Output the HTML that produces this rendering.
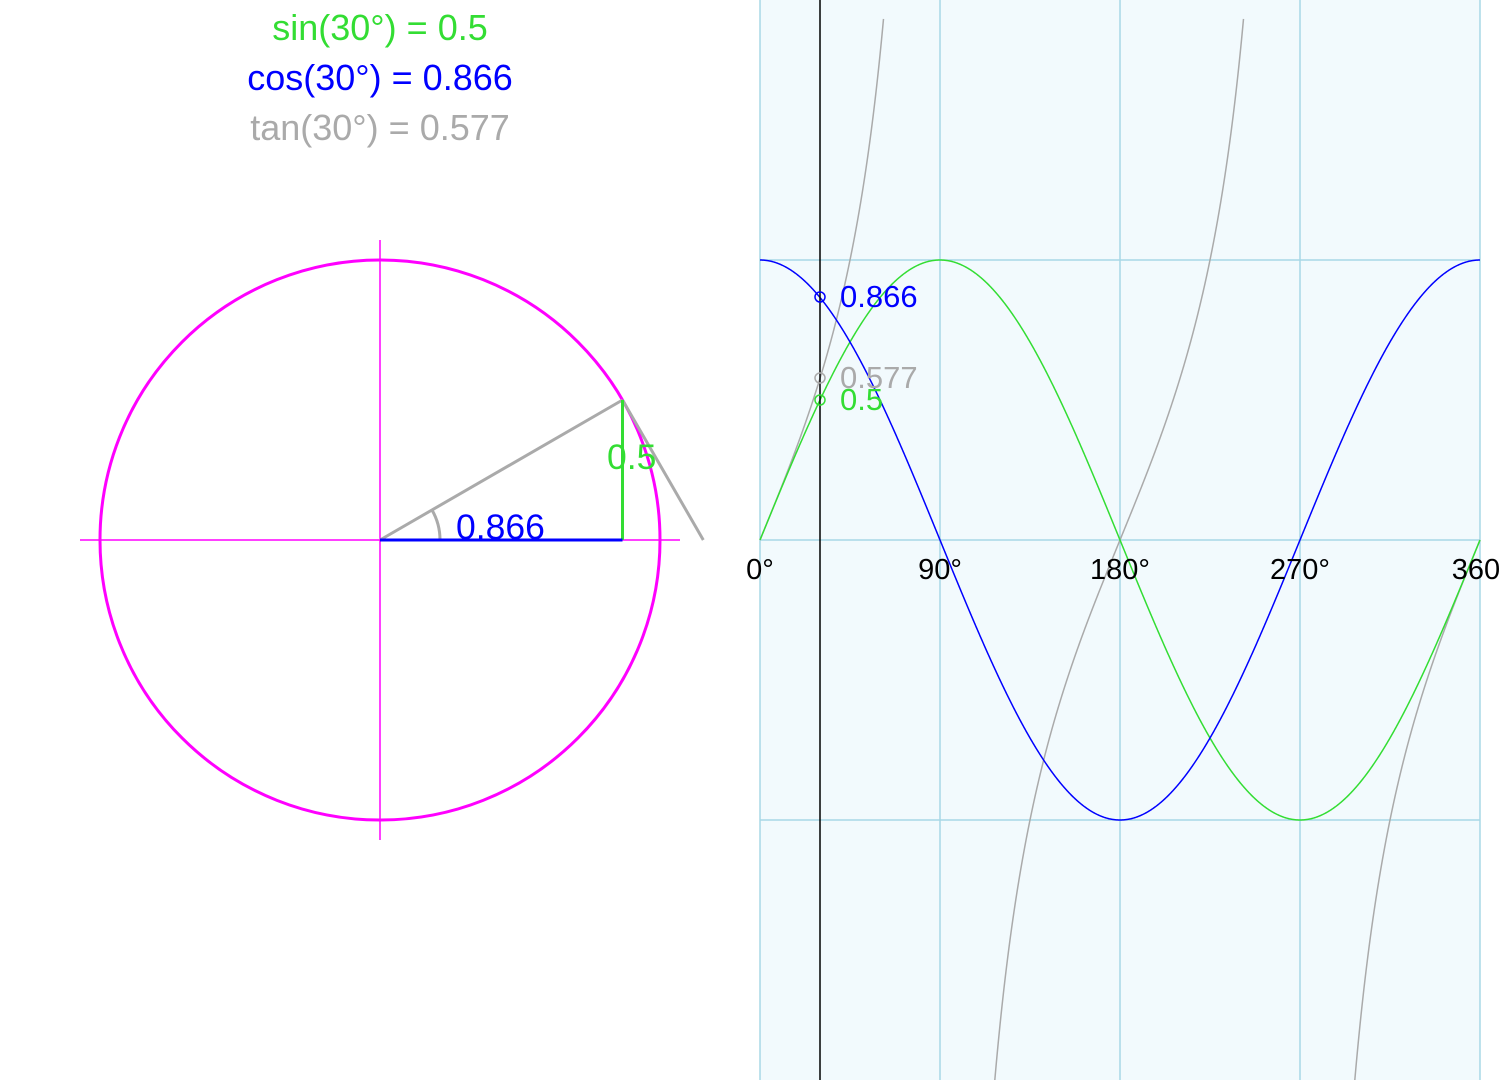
<!DOCTYPE html>
<html><head><meta charset="utf-8">
<style>
html,body{margin:0;padding:0;background:#fff;width:1500px;height:1080px;overflow:hidden}
svg{display:block}
text{font-family:"Liberation Sans",Arial,sans-serif}
</style></head>
<body>
<svg width="1500" height="1080" viewBox="0 0 1500 1080" xmlns="http://www.w3.org/2000/svg">
<rect x="760" y="0" width="720" height="1080" fill="#f2fafd"/>
<g stroke="#a8d8e6" stroke-width="1.5">
<line x1="760" y1="0" x2="760" y2="1080"/>
<line x1="940" y1="0" x2="940" y2="1080"/>
<line x1="1120" y1="0" x2="1120" y2="1080"/>
<line x1="1300" y1="0" x2="1300" y2="1080"/>
<line x1="1480" y1="0" x2="1480" y2="1080"/>
<line x1="760" y1="260" x2="1480" y2="260"/>
<line x1="760" y1="540" x2="1480" y2="540"/>
<line x1="760" y1="820" x2="1480" y2="820"/>
</g>
<g fill="none" stroke-width="1.5">
<path id="tan" stroke="#aaaaaa"/>
<path id="sin" stroke="#33dd33"/>
<path id="cos" stroke="#0000ff"/>
</g>
<line x1="820" y1="0" x2="820" y2="1080" stroke="#000" stroke-width="1.5"/>
<g fill="none" stroke-width="1.5">
<circle cx="820" cy="297" r="5" stroke="#0000ff"/>
<circle cx="820" cy="378" r="5" stroke="#aaaaaa"/>
<circle cx="820" cy="400" r="5" stroke="#33dd33"/>
</g>
<g font-size="31">
<text x="840" y="307" fill="#0000ff">0.866</text>
<text x="840" y="388" fill="#aaaaaa">0.577</text>
<text x="840" y="410" fill="#33dd33">0.5</text>
</g>
<g font-size="29" fill="#000" text-anchor="middle">
<text x="760" y="579">0°</text>
<text x="940" y="579">90°</text>
<text x="1120" y="579">180°</text>
<text x="1300" y="579">270°</text>
<text x="1476" y="579">360</text>
</g>

<line x1="80" y1="540" x2="680" y2="540" stroke="#ff00ff" stroke-width="1.5"/>
<line x1="380" y1="240" x2="380" y2="840" stroke="#ff00ff" stroke-width="1.5"/>
<circle cx="380" cy="540" r="280" fill="none" stroke="#ff00ff" stroke-width="3"/>
<line x1="380" y1="540" x2="622.5" y2="400" stroke="#aaaaaa" stroke-width="3"/>
<line x1="622.5" y1="400" x2="703.3" y2="540" stroke="#aaaaaa" stroke-width="3"/>
<path d="M440 540 A60 60 0 0 0 432 510" fill="none" stroke="#aaaaaa" stroke-width="3"/>
<line x1="622.5" y1="400" x2="622.5" y2="540" stroke="#33dd33" stroke-width="3"/>
<line x1="380" y1="540" x2="622.5" y2="540" stroke="#0000ff" stroke-width="3"/>
<text x="456" y="539" font-size="35.5" fill="#0000ff">0.866</text>
<text x="607" y="469" font-size="35.5" fill="#33dd33">0.5</text>

<g font-size="36" text-anchor="middle">
<text x="380" y="40" fill="#33dd33">sin(30°) = 0.5</text>
<text x="380" y="90" fill="#0000ff">cos(30°) = 0.866</text>
<text x="380" y="140" fill="#aaaaaa">tan(30°) = 0.577</text>
</g>
</svg>
<script>
(function(){
function mk(f,clip){
 var d="",pen=false;
 for(var a=0;a<=360;a+=0.25){
  var v=f(a*Math.PI/180),y=540-280*v,x=760+2*a;
  if(clip&&(y<14||y>1090)){pen=false;continue;}
  d+=(pen?"L":"M")+x.toFixed(2)+" "+y.toFixed(2);pen=true;
 }
 return d;
}
document.getElementById("sin").setAttribute("d",mk(Math.sin));
document.getElementById("cos").setAttribute("d",mk(Math.cos));
document.getElementById("tan").setAttribute("d",mk(Math.tan,true));
})();
</script>
</body></html>
